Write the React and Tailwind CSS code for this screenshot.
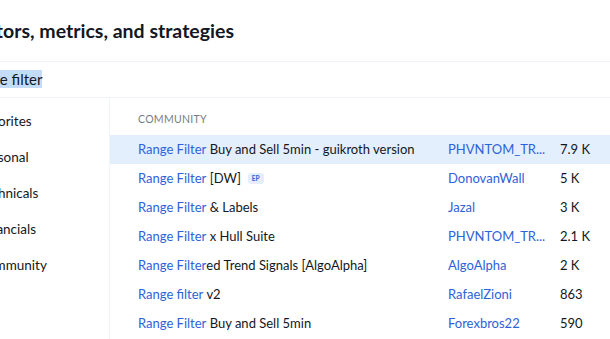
import React from 'react';

const sidebarItems = ['Favorites', 'Personal', 'Technicals', 'Financials', 'Community'];

const scripts = [
  { match: 'Range Filter', rest: ' Buy and Sell 5min - guikroth version', author: 'PHVNTOM_TR...', count: '7.9 K', active: true },
  { match: 'Range Filter', rest: ' [DW]', author: 'DonovanWall', count: '5 K', badge: 'EP' },
  { match: 'Range Filter', rest: ' & Labels', author: 'Jazal', count: '3 K' },
  { match: 'Range Filter', rest: ' x Hull Suite', author: 'PHVNTOM_TR...', count: '2.1 K' },
  { match: 'Range Filter', rest: 'ed Trend Signals [AlgoAlpha]', author: 'AlgoAlpha', count: '2 K' },
  { match: 'Range filter', rest: ' v2', author: 'RafaelZioni', count: '863' },
  { match: 'Range Filter', rest: ' Buy and Sell 5min', author: 'Forexbros22', count: '590' },
];

const App = () => {
  return (
    <div
      className="w-[610px] h-[339px] overflow-hidden bg-white text-[#131722]"
      style={{ fontFamily: 'Lato, "Noto Sans", sans-serif' }}
    >
      {/* dialog is scrolled partly off the left edge */}
      <div className="-ml-[76px] w-[686px]">
        {/* Title */}
        <div className="h-[61px] flex items-center pl-[20px] pt-[1px]">
          <h1 className="text-[19.5px] font-bold">Indicators, metrics, and strategies</h1>
        </div>

        {/* Search */}
        <div className="h-[37px] border-y border-[#f0f3fa] flex items-center pl-[7px] gap-[12px]">
          <svg width="24" height="24" viewBox="0 0 24 24" fill="none" stroke="#131722" strokeWidth="1.5">
            <circle cx="11" cy="11" r="6.5" />
            <path d="M16 16l4.5 4.5" />
          </svg>
          <span className="text-[15px]">
            Rang<span className="bg-[#c5dcf8]">e filter</span>
          </span>
        </div>

        <div className="flex">
          {/* Sidebar */}
          <div className="w-[186px] border-r border-[#f0f3fa] pt-[5px] h-[241px]">
            {sidebarItems.map((item) => (
              <div key={item} className="h-[36px] flex items-center pl-[18px] gap-[12px] text-[13.5px]">
                <span className="w-[24px] h-[24px]" />
                <span>{item}</span>
              </div>
            ))}
          </div>

          {/* Results */}
          <div className="flex-1">
            <div className="h-[37px] flex items-center pt-[7px] pl-[28px] text-[10.5px] tracking-[0.3px] text-[#787b86]">
              COMMUNITY
            </div>
            {scripts.map((s, i) => (
              <div
                key={i}
                className={`h-[29px] flex items-center pl-[28px] text-[13px] ${s.active ? 'bg-[#e3effd]' : ''}`}
              >
                <div className="w-[310px] flex items-center">
                  <span className="text-[#2e62d9]">{s.match}</span>
                  <span className="whitespace-pre">{s.rest}</span>
                  {s.badge && (
                    <span className="ml-[7px] px-[4px] h-[11px] leading-[11px] rounded-[3px] bg-[#e3effd] text-[#2e62d9] text-[6.5px] font-bold">
                      {s.badge}
                    </span>
                  )}
                </div>
                <div className="w-[112px] text-[#2e62d9]">{s.author}</div>
                <div>{s.count}</div>
              </div>
            ))}
          </div>
        </div>
      </div>
    </div>
  );
};

export default App;
